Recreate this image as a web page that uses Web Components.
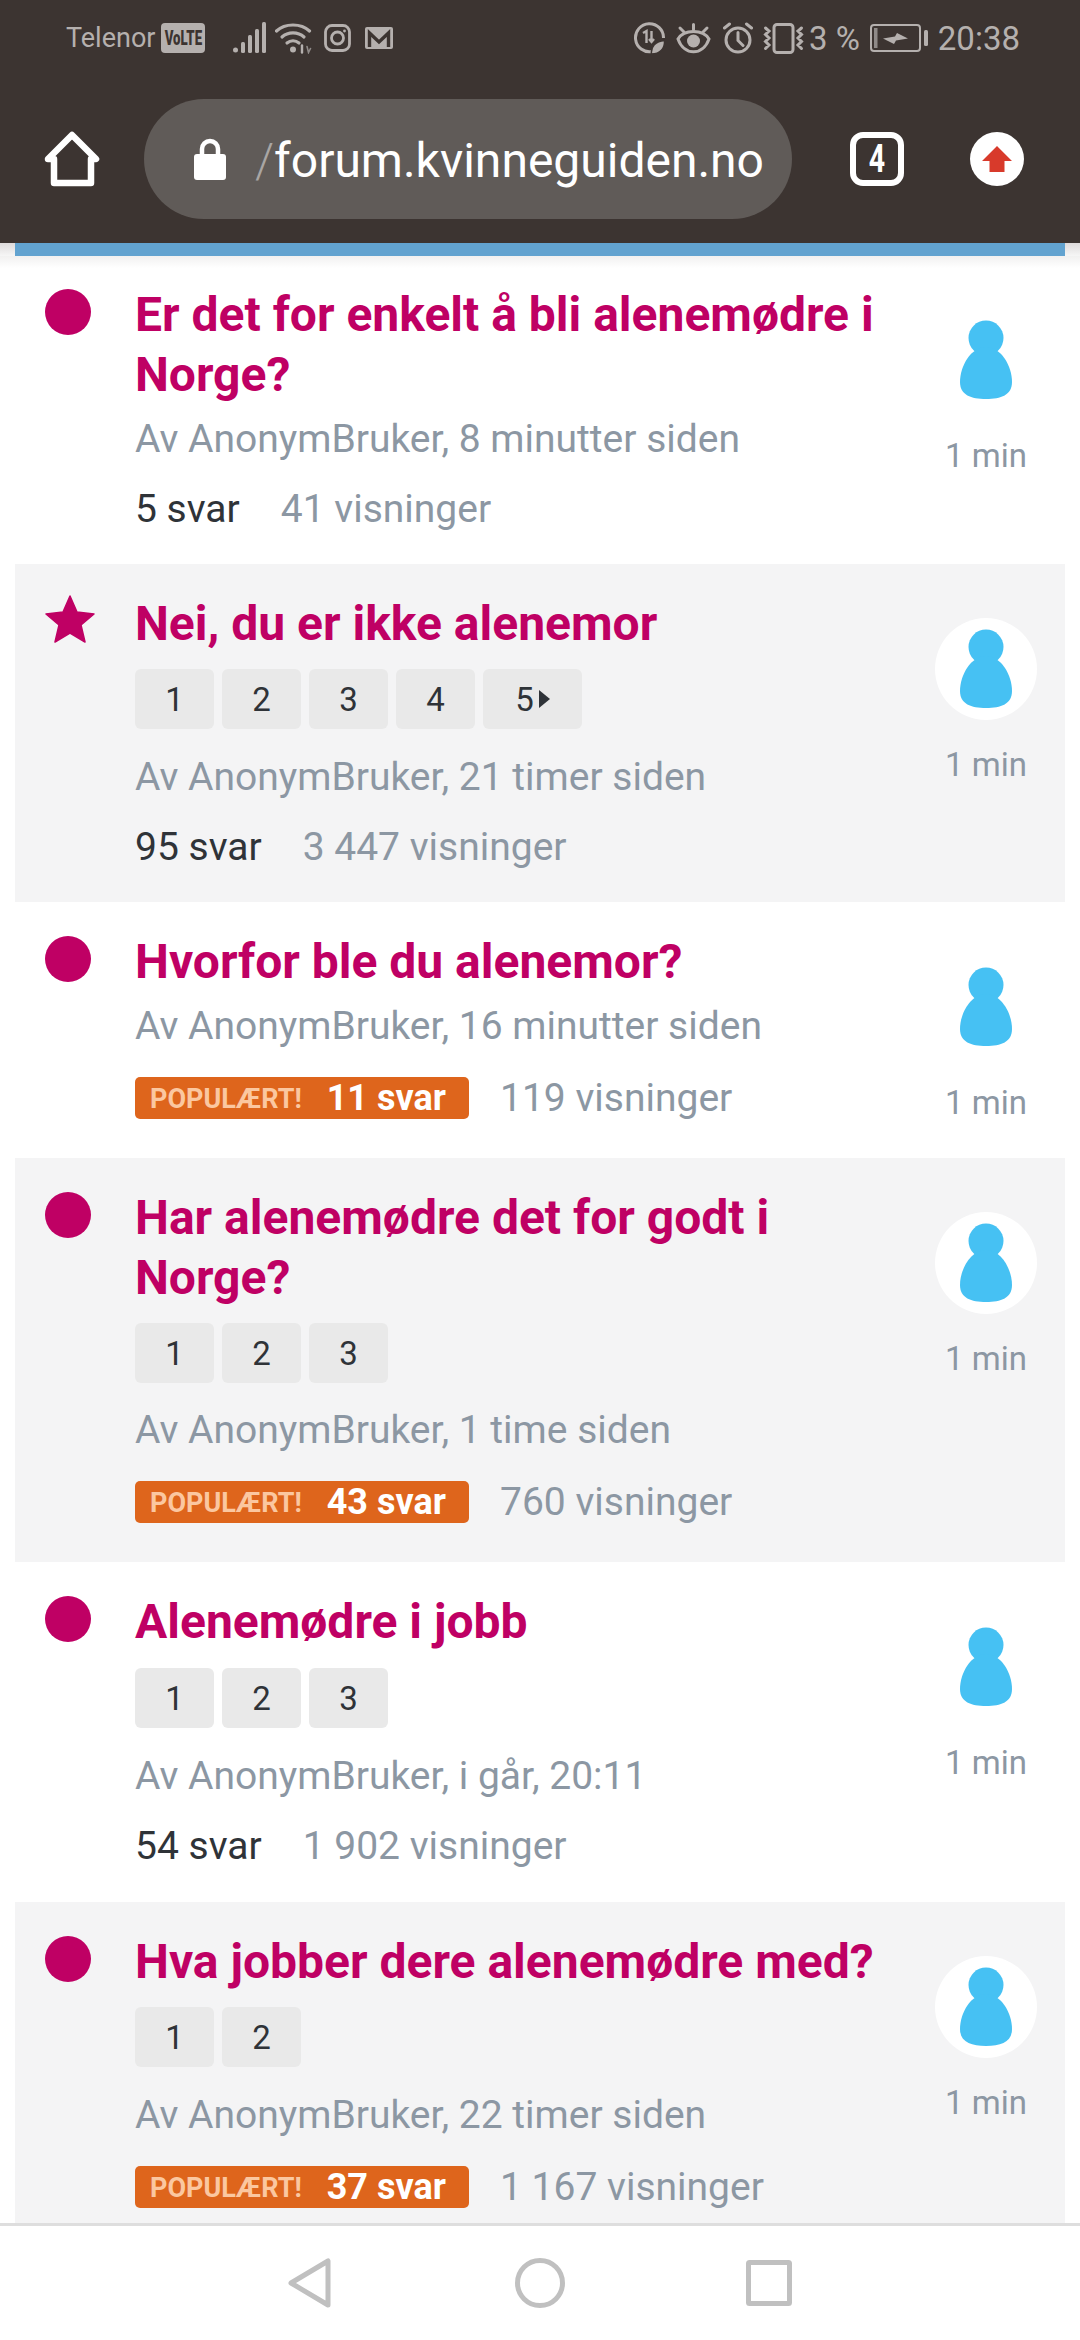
<!doctype html>
<html lang="no">
<head>
<meta charset="utf-8">
<title>Forum</title>
<style>
  html, body { margin: 0; padding: 0; background: #fff; }
  body { font-family: Roboto, "Noto Sans", sans-serif; }
</style>
</head>
<body>
<phone-shell>
  <status-bar slot="top"></status-bar>
  <browser-bar slot="top" url="forum.kvinneguiden.no" tabs="4"></browser-bar>

  <topic-row style="--pad: 29px" title="Er det for enkelt å bli alenemødre i Norge?" by="Av AnonymBruker, 8 minutter siden" replies="5 svar" views="41 visninger"></topic-row>
  <topic-row alt star title="Nei, du er ikke alenemor" pages="5+" by="Av AnonymBruker, 21 timer siden" replies="95 svar" views="3 447 visninger"></topic-row>
  <topic-row title="Hvorfor ble du alenemor?" by="Av AnonymBruker, 16 minutter siden" popular replies="11 svar" views="119 visninger"></topic-row>
  <topic-row alt style="--page-gap: 16px" title="Har alenemødre det for godt i Norge?" pages="3" by="Av AnonymBruker, 1 time siden" popular replies="43 svar" views="760 visninger"></topic-row>
  <topic-row style="--title-gap: 16px; --end: 28px" title="Alenemødre i jobb" pages="3" by="Av AnonymBruker, i går, 20:11" replies="54 svar" views="1 902 visninger"></topic-row>
  <topic-row alt title="Hva jobber dere alenemødre med?" pages="2" by="Av AnonymBruker, 22 timer siden" popular replies="37 svar" views="1 167 visninger"></topic-row>

  <nav-bar slot="bottom"></nav-bar>
</phone-shell>

<script>
const css = String.raw
const html = String.raw

class PhoneShell extends HTMLElement {
  constructor() {
    super()
    this.attachShadow({ mode: "open" })
    this.shadowRoot.innerHTML = html`
      <style>
        ${css`
          :host {
            display: flex;
            flex-direction: column;
            width: 1080px;
            height: 2340px;
            overflow: hidden;
            background: #fff;
          }
          header { flex: none; background: #3c3431; height: 243px; }
          .edge {
            flex: none;
            padding: 0 15px;
            background: linear-gradient(#dedbdb, #f6f6f6);
          }
          .strip { height: 13px; background: #62a3d0; }
          main {
            position: relative;
            flex: 1;
            min-height: 0;
            overflow: hidden;
            padding: 0 15px;
          }
          main::after {
            content: "";
            position: absolute;
            top: 0;
            left: 0;
            right: 0;
            height: 12px;
            background: linear-gradient(rgba(60, 52, 49, 0.07), rgba(60, 52, 49, 0));
          }
          footer { flex: none; }
        `}
      </style>
      <header><slot name="top"></slot></header>
      <div class="edge"><div class="strip"></div></div>
      <main><slot></slot></main>
      <footer><slot name="bottom"></slot></footer>
    `
  }
}
customElements.define("phone-shell", PhoneShell)

class StatusBar extends HTMLElement {
  constructor() {
    super()
    this.attachShadow({ mode: "open" })
    this.shadowRoot.innerHTML = html`
      <style>
        ${css`
          :host {
            display: flex;
            align-items: center;
            justify-content: space-between;
            height: 76px;
            padding: 0 60px 0 66px;
            color: #b5b0ae;
            font: 400 27px Roboto, sans-serif;
          }
          .group { display: flex; align-items: center; }
          svg { display: block; flex: none; }
          .volte {
            display: flex;
            justify-content: center;
            margin-left: 6px;
            width: 44px;
            height: 30px;
            border-radius: 4px;
            background: #b5b0ae;
            color: #3c3431;
            font: 900 20px/30px Roboto, sans-serif;
          }
          .volte span { flex: none; transform: scaleX(0.66); }
        `}
      </style>
      <div class="group">
        <span>Telenor</span>
        <span class="volte"><span>VoLTE</span></span>
        <svg style="margin-left:28px" width="33" height="32" viewBox="0 0 33 32" fill="#b5b0ae">
          <circle cx="2.500" cy="28" r="2.500"/>
          <rect x="8" y="20" width="4" height="11" rx="1.500"/>
          <rect x="15" y="13" width="4" height="18" rx="1.500"/>
          <rect x="22" y="7" width="4" height="24" rx="1.500"/>
          <rect x="29" y="0" width="4" height="31" rx="1.500"/>
        </svg>
        <svg style="margin-left:9px" width="37" height="32" viewBox="0 0 37 32" fill="none" stroke="#b5b0ae" stroke-width="3.200" stroke-linecap="round">
          <path d="M1.500 9C10 1 26 1 34.500 9"/>
          <path d="M7 15C13 9.500 23 9.500 29 15"/>
          <path d="M12 21C15.500 18 20.500 18 24 21"/>
          <circle cx="18" cy="27.500" r="3" fill="#b5b0ae" stroke="none"/>
          <path d="M27 23.500v7" stroke-width="2.400"/>
          <path d="M32 24.500l1.500 6 2-4" stroke="#8f8a88" stroke-width="1.600"/>
        </svg>
        <svg style="margin-left:12px" width="27" height="28" viewBox="0 0 27 28" fill="none" stroke="#b5b0ae" stroke-width="2.800">
          <rect x="1.500" y="1.500" width="24" height="25" rx="6.500"/>
          <circle cx="13.500" cy="14" r="6"/>
          <circle cx="20.500" cy="7" r="1.400" fill="#b5b0ae" stroke="none"/>
        </svg>
        <svg style="margin-left:14px" width="28" height="22" viewBox="0 0 28 22">
          <rect width="28" height="22" rx="2" fill="#b5b0ae"/>
          <path d="M4.500 20V6l9.500 9 9.500-9v14" fill="none" stroke="#3c3431" stroke-width="3.400"/>
        </svg>
      </div>
      <div class="group">
        <svg width="31" height="32" viewBox="0 0 31 32" fill="none" stroke="#b5b0ae" stroke-width="3">
          <path d="M18 29.500A14 14 0 1 1 29.500 16"/>
          <path d="M9 11l3.500-2v12M17.500 9v11M15 17l2.500 3 2.500-3" stroke-width="2.400"/>
          <path d="M17.500 32c-1-7 4-13 13-13.500 .5 8-4.500 13.500-13 13.500z" fill="#b5b0ae" stroke="#3c3431" stroke-width="1.500"/>
        </svg>
        <svg style="margin-left:11px" width="35" height="31" viewBox="0 0 35 31" fill="none" stroke="#b5b0ae" stroke-width="3" stroke-linecap="round">
          <path d="M2 16C8 6 27 6 33 16C27 33 8 33 2 16Z"/>
          <circle cx="17.500" cy="18" r="6.500" fill="#b5b0ae" stroke="none"/>
          <path d="M17.500 1.500v5M4 5l4 4M31 5l-4 4"/>
        </svg>
        <svg style="margin-left:12px" width="30" height="32" viewBox="0 0 30 32" fill="none" stroke="#b5b0ae" stroke-width="3" stroke-linecap="round">
          <circle cx="15" cy="18" r="12"/>
          <path d="M15 10.500v8l5 5M1.500 6l5-4M28.500 6l-5-4"/>
        </svg>
        <svg style="margin-left:10px" width="41" height="31" viewBox="0 0 41 31" fill="none" stroke="#b5b0ae" stroke-width="3" stroke-linecap="round">
          <rect x="11" y="1.500" width="19" height="28" rx="3"/>
          <path d="M2.500 5l3.500 3-3.500 3.500 3.500 3.500-3.500 3.500 3.500 3.500-3.500 3.500M38.500 5l-3.500 3 3.500 3.500-3.500 3.500 3.500 3.500-3.500 3.500 3.500 3.500"/>
        </svg>
        <span style="margin-left:5px;font-size:33px">3 %</span>
        <svg style="margin-left:10px" width="58" height="28" viewBox="0 0 58 28">
          <rect x="1" y="1" width="49" height="26" rx="3" fill="none" stroke="#b5b0ae" stroke-width="2"/>
          <rect x="4" y="4" width="3.500" height="20" fill="#8f8a88"/>
          <rect x="54" y="6" width="4" height="16" rx="1.500" fill="#b5b0ae"/>
          <path d="M13 14.500L25 12.500L27 9L38 14.500L26 16.500L24 20Z" fill="#b5b0ae"/>
        </svg>
        <span style="margin-left:10px;font-size:33px">20:38</span>
      </div>
    `
  }
}
customElements.define("status-bar", StatusBar)

class BrowserBar extends HTMLElement {
  static get observedAttributes() {
    return ["url", "tabs"]
  }
  constructor() {
    super()
    this.attachShadow({ mode: "open" })
    this.shadowRoot.innerHTML = html`
      <style>
        ${css`
          :host {
            display: flex;
            align-items: center;
            height: 120px;
            margin-top: 23px;
            padding-left: 44px;
            color: #fff;
            font-family: Roboto, sans-serif;
          }
          svg { display: block; flex: none; }
          .pill {
            display: flex;
            align-items: center;
            flex: none;
            box-sizing: border-box;
            width: 648px;
            height: 120px;
            margin-left: 44px;
            padding-left: 50px;
            border-radius: 60px;
            background: #605b58;
            font-size: 48px;
            white-space: nowrap;
          }
          .slash, .url { padding-top: 2px; }
          .slash { margin-left: 29px; color: #a9a6a4; font-weight: 300; }
          .tabs {
            flex: none;
            box-sizing: border-box;
            width: 54px;
            height: 54px;
            margin-left: 58px;
            border: 6px solid #fff;
            border-radius: 13px;
            font: 700 38px/42px Roboto, sans-serif;
            text-align: center;
            overflow: hidden;
          }
          .tabs span { display: block; transform: scaleX(0.75); }
          .update { margin-left: 66px; }
        `}
      </style>
      <svg width="56" height="56" viewBox="0 0 56 56" fill="none" stroke="#fff" stroke-width="6.500" stroke-linejoin="round" stroke-linecap="round">
        <path d="M4 28L28 4L52 28H47V52H10V28Z"/>
      </svg>
      <div class="pill">
        <svg width="32" height="42" viewBox="0 0 32 42">
          <path d="M8 18V11a8 8 0 0 1 16 0v7" fill="none" stroke="#fff" stroke-width="4.500"/>
          <rect y="16" width="32" height="26" rx="3" fill="#fff"/>
        </svg>
        <span class="slash">/</span><span class="url"></span>
      </div>
      <div class="tabs"><span></span></div>
      <svg class="update" width="54" height="54" viewBox="0 0 54 54">
        <circle cx="27" cy="27" r="27" fill="#fff"/>
        <path d="M27 14L42 29H34.500V40H19.500V29H12Z" fill="#d83a2b"/>
      </svg>
    `
  }
  attributeChangedCallback(name, oldValue, newValue) {
    if (oldValue !== newValue)
      switch (name) {
        case "url":
          this.shadowRoot.querySelector(".url").textContent = newValue
          break
        case "tabs":
          this.shadowRoot.querySelector(".tabs span").textContent = newValue
      }
  }
}
customElements.define("browser-bar", BrowserBar)

class PageButtons extends HTMLElement {
  static get observedAttributes() {
    return ["pages"]
  }
  constructor() {
    super()
    this.attachShadow({ mode: "open" })
    this.shadowRoot.innerHTML = html`
      <style>
        ${css`
          :host {
            display: flex;
            gap: 8px;
            height: 60px;
            margin: 0 0 var(--page-gap, 17px);
          }
          span {
            display: flex;
            align-items: center;
            justify-content: center;
            width: 79px;
            height: 60px;
            border-radius: 6px;
            background: #e9e9e9;
            color: #2f3338;
            font: 400 33px Roboto, sans-serif;
          }
          span.more { width: 99px; gap: 5px; }
          i {
            width: 0;
            height: 0;
            border-left: 11px solid #2f3338;
            border-top: 9px solid transparent;
            border-bottom: 9px solid transparent;
          }
        `}
      </style>
      <div id="list" style="display:contents"></div>
    `
  }
  attributeChangedCallback(name, oldValue, newValue) {
    if (name !== "pages" || oldValue === newValue) return
    const more = newValue.endsWith("+")
    const count = parseInt(newValue)
    let out = ""
    for (let i = 1; i <= count; i++)
      out += more && i === count ? html`<span class="more">${i}<i></i></span>` : html`<span>${i}</span>`
    this.shadowRoot.getElementById("list").innerHTML = out
  }
}
customElements.define("page-buttons", PageButtons)

class TopicRow extends HTMLElement {
  constructor() {
    super()
    this.attachShadow({ mode: "open" })
    this.shadowRoot.innerHTML = html`
      <style>
        ${css`
          :host {
            display: grid;
            grid-template-columns: 120px minmax(0, 1fr) 150px;
            box-sizing: border-box;
            padding: var(--pad, 30px) 4px var(--end, 27px) 0;
            background: #fff;
            font-family: Roboto, sans-serif;
          }
          :host([alt]) { background: #f4f4f5; }
          .dot {
            width: 46px;
            height: 46px;
            margin: 4px 0 0 30px;
            border-radius: 50%;
            background: #bf0064;
          }
          .star { display: block; margin: 1px 0 0 30px; }
          h3 {
            margin: 0;
            max-width: 770px;
            color: #bf0064;
            font: 700 48px/60px Roboto, sans-serif;
          }
          .paged h3 { margin-bottom: var(--title-gap, 15px); }
          .by {
            height: 60px;
            margin-top: 3px;
            color: #8c97a3;
            font-size: 39px;
            line-height: 63px;
          }
          .paged .by { margin-top: 0; }
          .stats {
            display: flex;
            align-items: center;
            box-sizing: border-box;
            height: 60px;
            margin-top: 9px;
            padding-top: 3px;
            font-size: 39px;
            color: #8c97a3;
          }
          .stats.hot { height: 67px; padding-top: 0; }
          .replies { color: #2f3338; margin-right: 41px; }
          .badge {
            display: flex;
            align-items: center;
            box-sizing: border-box;
            width: 334px;
            height: 42px;
            margin-right: 31px;
            padding-left: 15px;
            border-radius: 5px;
            background: #de651c;
            color: #fff;
            white-space: nowrap;
          }
          .badge b { font-size: 36px; font-weight: 700; }
          .badge small {
            margin: 3px 25px 0 0;
            color: #fbc7a0;
            font-size: 27px;
            font-weight: 700;
          }
          .side {
            display: flex;
            flex-direction: column;
            align-items: center;
            padding-top: 24px;
            color: #8c97a3;
            font-size: 33px;
          }
          .ring {
            display: flex;
            align-items: center;
            justify-content: center;
            width: 102px;
            height: 102px;
            border-radius: 50%;
          }
          :host([alt]) .ring { background: #fff; }
          .min { margin-top: 25px; line-height: 40px; }
        `}
      </style>
      <div class="mark"></div>
      <div class="body">
        <h3></h3>
        <div class="pages-slot"></div>
        <div class="by"></div>
        <div class="stats"></div>
      </div>
      <div class="side">
        <div class="ring">
          <svg width="54" height="80" viewBox="0 0 54 80" fill="#46c1f3">
            <circle cx="27" cy="18" r="17.500"/>
            <path d="M27 27C12 27 1 46 1 62C1 75 12 79 27 79C42 79 53 75 53 62C53 46 42 27 27 27Z"/>
          </svg>
        </div>
        <div class="min">1 min</div>
      </div>
    `
  }
  connectedCallback() {
    const root = this.shadowRoot
    root.querySelector("h3").textContent = this.getAttribute("title")
    root.querySelector(".by").textContent = this.getAttribute("by")
    root.querySelector(".mark").innerHTML = this.hasAttribute("star")
      ? html`<svg class="star" width="50" height="48" viewBox="0 0 50 48"><path d="M25 1L32 17L49 19L36 30L40 47L25 38L10 47L14 30L1 19L18 17Z" fill="#bf0064" stroke="#bf0064" stroke-width="1.500" stroke-linejoin="round"/></svg>`
      : html`<div class="dot"></div>`
    if (this.hasAttribute("pages")) {
      const buttons = document.createElement("page-buttons")
      buttons.setAttribute("pages", this.getAttribute("pages"))
      root.querySelector(".pages-slot").append(buttons)
      root.querySelector(".body").classList.add("paged")
    }
    const stats = root.querySelector(".stats")
    const replies = this.getAttribute("replies")
    const views = this.getAttribute("views")
    if (this.hasAttribute("popular")) {
      stats.classList.add("hot")
      stats.innerHTML = html`<span class="badge"><small>POPULÆRT!</small><b>${replies}</b></span><span>${views}</span>`
    } else {
      stats.innerHTML = html`<span class="replies">${replies}</span><span>${views}</span>`
    }
  }
}
customElements.define("topic-row", TopicRow)

class NavBar extends HTMLElement {
  constructor() {
    super()
    this.attachShadow({ mode: "open" })
    this.shadowRoot.innerHTML = html`
      <style>
        ${css`
          :host {
            display: flex;
            align-items: center;
            box-sizing: border-box;
            height: 117px;
            padding: 0 0 0 288px;
            border-top: 3px solid #dedede;
            background: #fff;
          }
          svg { display: block; flex: none; }
        `}
      </style>
      <svg width="44" height="50" viewBox="0 0 44 50" fill="none" stroke="#c0c0c0" stroke-width="5" stroke-linejoin="round">
        <path d="M40 3V47L3 25Z"/>
      </svg>
      <svg style="margin-left:183px" width="50" height="50" viewBox="0 0 50 50" fill="none" stroke="#c0c0c0" stroke-width="5">
        <circle cx="25" cy="25" r="22.500"/>
      </svg>
      <svg style="margin-left:181px" width="46" height="46" viewBox="0 0 46 46" fill="none" stroke="#c0c0c0" stroke-width="5" stroke-linejoin="round">
        <rect x="2.500" y="2.500" width="41" height="41" rx="1"/>
      </svg>
    `
  }
}
customElements.define("nav-bar", NavBar)
</script>
</body>
</html>
